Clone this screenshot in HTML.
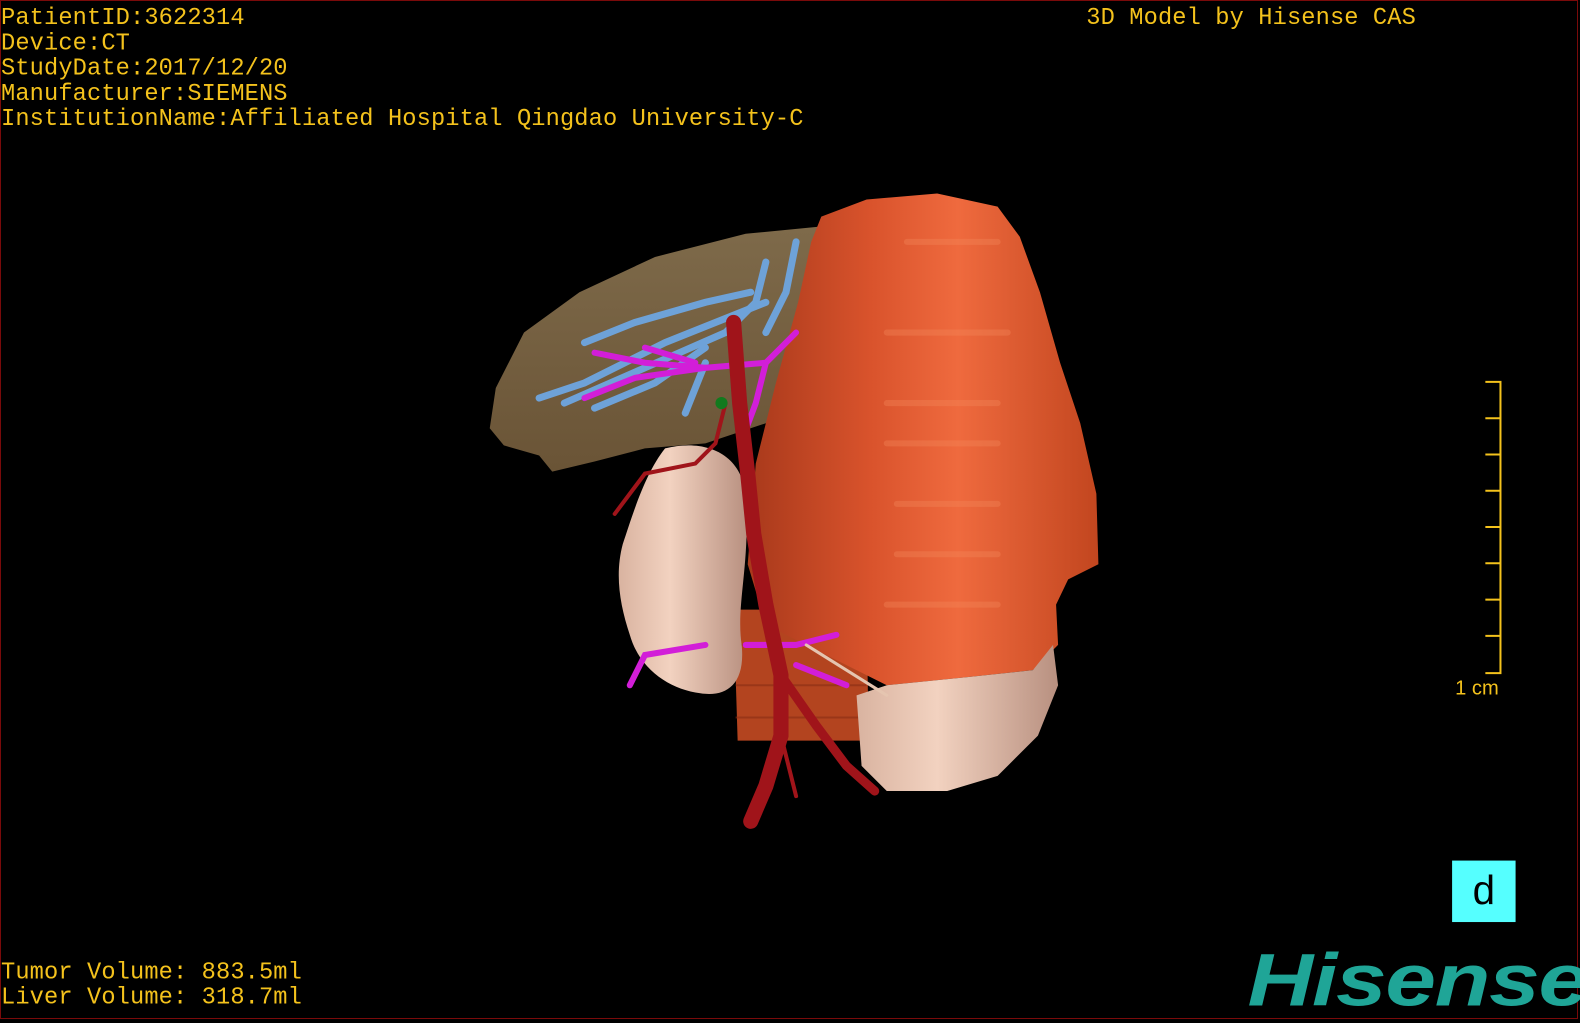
<!DOCTYPE html>
<html><head><meta charset="utf-8"><style>
html,body{margin:0;padding:0;background:#000;}
body{width:1580px;height:1020px;position:relative;overflow:hidden;}
.wrap{position:absolute;left:0;top:0;width:1568px;height:1012px;transform:scale(1.0077);transform-origin:0 0;}
.frame{position:absolute;left:0;top:0;width:1576px;height:1017px;border:1px solid #7a0a0a;}
.t{position:absolute;font-family:"Liberation Mono",monospace;font-size:23.5px;color:#f4c21c;line-height:25px;white-space:pre;letter-spacing:0.12px;}
.logo{position:absolute;left:1238px;top:930px;font-family:"Liberation Sans",sans-serif;font-weight:bold;font-style:italic;font-size:74px;color:#1fa597;transform:scaleX(1.22);transform-origin:left top;letter-spacing:-1px;}
.box{position:absolute;left:1441px;top:854px;width:63px;height:61px;background:#55ffff;color:#000;font-family:"Liberation Sans",sans-serif;font-size:40px;text-align:center;line-height:60px;}
</style></head><body>
<div class="frame"></div>
<div class="wrap">
<div class="t" style="left:1px;top:6px">PatientID:3622314
Device:CT
StudyDate:2017/12/20
Manufacturer:SIEMENS
InstitutionName:Affiliated Hospital Qingdao University-C</div>
<div class="t" style="left:1078px;top:6px">3D Model by Hisense CAS</div>
<div class="t" style="left:1px;top:953px">Tumor Volume: 883.5ml
Liver Volume: 318.7ml</div>
<svg width="1568" height="1012" style="position:absolute;left:0;top:0">
<defs>
<linearGradient id="tg" x1="0" x2="1" y1="0" y2="0">
<stop offset="0" stop-color="#a8391b"/><stop offset="0.35" stop-color="#d9532c"/><stop offset="0.6" stop-color="#ef6a3e"/><stop offset="1" stop-color="#c2461f"/></linearGradient>
<linearGradient id="kg" x1="0" x2="1"><stop offset="0" stop-color="#d9b3a0"/><stop offset="0.4" stop-color="#f2d2c0"/><stop offset="1" stop-color="#b89080"/></linearGradient>
<linearGradient id="lg" x1="0" x2="0" y1="0" y2="1"><stop offset="0" stop-color="#7e6a4a"/><stop offset="1" stop-color="#6a5436"/></linearGradient>
</defs>
<path d="M486,425 L492,385 L520,330 L575,290 L650,255 L740,232 L812,225 L805,330 L760,420 L700,440 L640,445 L590,458 L548,468 L535,452 L500,442 Z" fill="url(#lg)"/>
<path d="M728,605 L860,605 L862,735 L732,735 Z" fill="#b3441f"/>
<g stroke="#8a2e14" stroke-width="2" opacity="0.6"><line x1="730" y1="640" x2="860" y2="640"/><line x1="730" y1="680" x2="860" y2="680"/><line x1="730" y1="712" x2="860" y2="712"/></g>
<path d="M815,215 L860,198 L930,192 L990,205 L1012,235 L1032,290 L1052,360 L1072,420 L1088,490 L1090,560 L1060,575 L1048,600 L1050,640 L1025,665 L960,672 L880,680 L840,660 L760,620 L742,560 L750,460 L770,380 L792,300 L805,240 Z" fill="url(#tg)"/>
<g stroke="#f58a5c" stroke-width="6" opacity="0.35" stroke-linecap="round">
<line x1="900" y1="240" x2="990" y2="240"/><line x1="880" y1="330" x2="1000" y2="330"/><line x1="880" y1="400" x2="990" y2="400"/><line x1="880" y1="440" x2="990" y2="440"/><line x1="890" y1="500" x2="990" y2="500"/><line x1="890" y1="550" x2="990" y2="550"/><line x1="880" y1="600" x2="990" y2="600"/></g>
<path d="M850,690 L880,680 L960,672 L1025,665 L1045,640 L1050,680 L1030,730 L990,770 L940,785 L880,785 L855,760 Z" fill="url(#kg)"/>
<path d="M660,445 C700,435 735,450 740,490 C745,560 730,600 736,640 C740,680 720,692 695,688 C665,684 635,665 625,630 C615,600 610,570 618,540 C628,510 640,470 660,445 Z" fill="url(#kg)"/>
<g fill="none" stroke-linecap="round">
<g stroke="#6ea2d8" stroke-width="7"><path d="M760,260 L750,300 L720,330 L640,365 L560,400"/><path d="M760,300 L660,340 L580,380 L535,395"/><path d="M745,290 L700,300 L630,320 L580,340"/><path d="M700,345 L650,380 L590,405"/><path d="M790,240 L780,290 L760,330"/><path d="M700,360 L680,410"/></g>
<g stroke="#d21ed8" stroke-width="6"><path d="M790,330 L760,360 L700,365 L640,360 L590,350"/><path d="M700,365 L630,375 L580,395"/><path d="M760,360 L750,400 L735,440"/><path d="M640,345 L690,360"/><path d="M740,640 L790,640 L830,630"/><path d="M700,640 L640,650 L625,680"/><path d="M790,660 L840,680"/></g>
<path d="M800,640 L880,690" stroke="#e5c5b0" stroke-width="3"/>
<g stroke="#a0141a"><path d="M728,320 L734,400 L742,470 L748,530 L760,600 L775,670 L775,730 L760,780 L745,815" stroke-width="15"/><path d="M775,670 L810,720 L840,760 L868,785" stroke-width="9"/><path d="M720,400 L710,440 L690,460 L640,470 L610,510" stroke-width="4"/><path d="M775,730 L790,790" stroke-width="4"/></g>
</g>
<circle cx="716" cy="400" r="6" fill="#127a1e"/>
<g stroke="#f4c21c" stroke-width="2" fill="none"><path d="M1474,379 H1489 V668 H1474"/>
<path d="M1474,415H1489M1474,451H1489M1474,487H1489M1474,523H1489M1474,559H1489M1474,595H1489M1474,631H1489"/></g>
<text x="1444" y="689" font-family="Liberation Sans,sans-serif" font-size="20" fill="#f4c21c">1 cm</text>
</svg>
<div class="box">d</div>
<div class="logo">Hisense</div>
</div>
</body></html>
